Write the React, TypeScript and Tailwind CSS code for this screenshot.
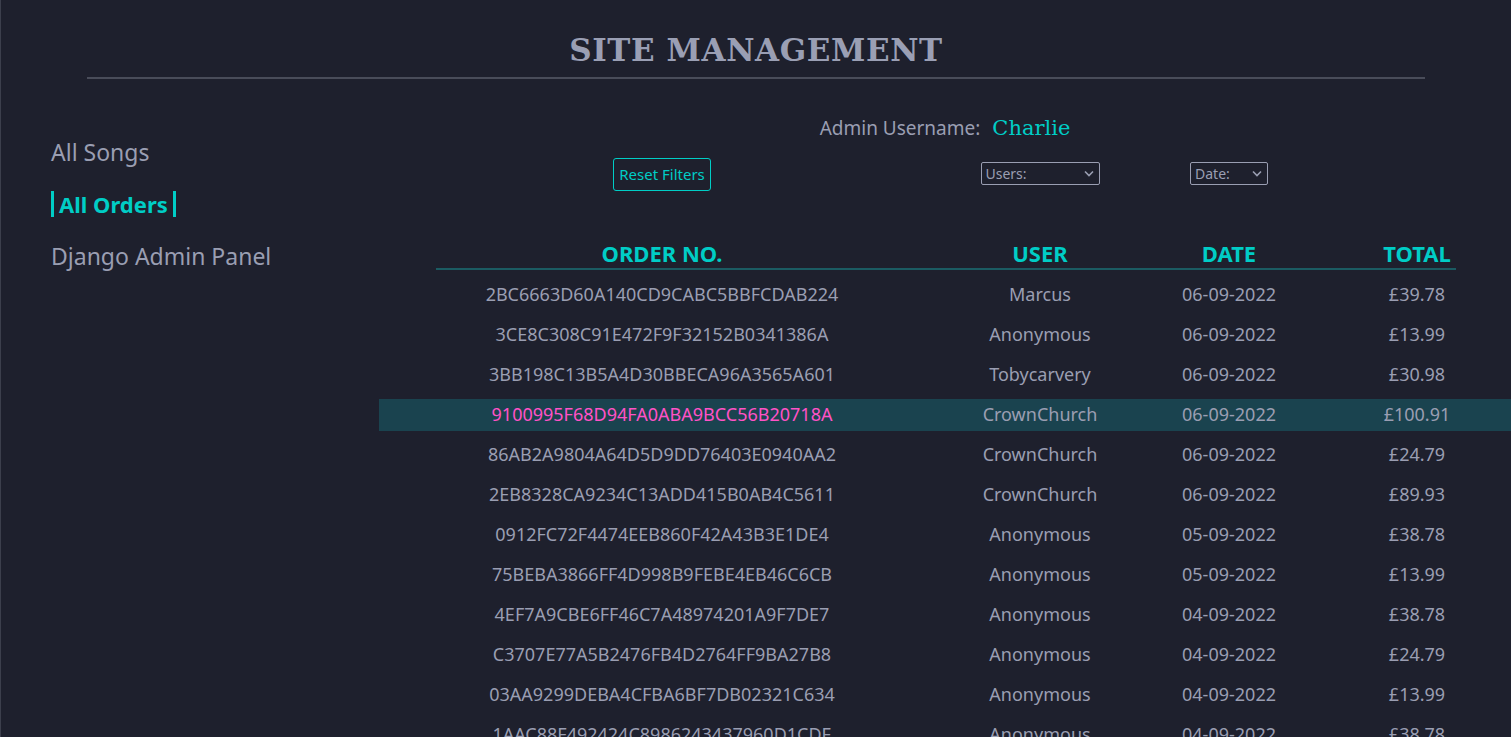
const orders = [
  ["2BC6663D60A140CD9CABC5BBFCDAB224", "Marcus", "06-09-2022", "£39.78"],
  ["3CE8C308C91E472F9F32152B0341386A", "Anonymous", "06-09-2022", "£13.99"],
  ["3BB198C13B5A4D30BBECA96A3565A601", "Tobycarvery", "06-09-2022", "£30.98"],
  ["9100995F68D94FA0ABA9BCC56B20718A", "CrownChurch", "06-09-2022", "£100.91"],
  ["86AB2A9804A64D5D9DD76403E0940AA2", "CrownChurch", "06-09-2022", "£24.79"],
  ["2EB8328CA9234C13ADD415B0AB4C5611", "CrownChurch", "06-09-2022", "£89.93"],
  ["0912FC72F4474EEB860F42A43B3E1DE4", "Anonymous", "05-09-2022", "£38.78"],
  ["75BEBA3866FF4D998B9FEBE4EB46C6CB", "Anonymous", "05-09-2022", "£13.99"],
  ["4EF7A9CBE6FF46C7A48974201A9F7DE7", "Anonymous", "04-09-2022", "£38.78"],
  ["C3707E77A5B2476FB4D2764FF9BA27B8", "Anonymous", "04-09-2022", "£24.79"],
  ["03AA9299DEBA4CFBA6BF7DB02321C634", "Anonymous", "04-09-2022", "£13.99"],
  ["1AAC88F492424C8986243437960D1CDE", "Anonymous", "04-09-2022", "£38.78"],
];

const HIGHLIGHT = 3;

function Select({ label, width }: { label: string; width: string }) {
  return (
    <div className={`${width} h-[23px] -mt-[3px] border border-[#9a9eb2] rounded-[2px] flex items-center justify-between pl-[4px] pr-[5px] text-[14px] text-[#9a9eb2]`}>
      <span>{label}</span>
      <svg width="10" height="7" viewBox="0 0 10 7" fill="none">
        <path d="M1 1.5l4 4 4-4" stroke="#9a9eb2" strokeWidth="1.6" />
      </svg>
    </div>
  );
}

export default function App() {
  return (
    <div className="h-[737px] overflow-hidden bg-[#1e202d] border-l border-[#3c3f4c] text-[#9a9eb2] font-['Noto_Sans',sans-serif]">
      {/* Title */}
      <div className="pt-[30px] px-[86px]">
        <h1 className="text-center text-[31px] leading-[40px] font-bold tracking-[0.6px] text-[#9a9fb4] font-['DejaVu_Serif',serif]">
          SITE MANAGEMENT
        </h1>
        <div className="mt-[7px] h-[2px] bg-[#494c59]" />
      </div>

      <div className="flex">
        {/* Sidebar */}
        <nav className="w-[378px] shrink-0 pl-[50px] pt-[57px] flex flex-col gap-[21px] text-[23px] leading-[32px]">
          <a className="text-[#9a9eb2]">All Songs</a>
          <a className="self-start font-bold text-[22px] text-[#00cdc6] border-x-[3px] border-[#00cdc6] px-[5px] leading-[26px] my-[2px]">
            All Orders
          </a>
          <a className="text-[#9a9eb2]">Django Admin Panel</a>
        </nav>

        {/* Main */}
        <main className="flex-1 min-w-0 pt-[34px]">
          <div className="flex justify-center items-baseline gap-[12px]">
            <span className="text-[19px]">Admin Username:</span>
            <span className="text-[21px] text-[#00cdc6] font-['DejaVu_Serif',serif]">Charlie</span>
          </div>

          <div className="grid grid-cols-[566px_190px_188px_188px] items-center mt-[13px] h-[34px]">
            <div className="flex justify-center">
              <button className="h-[33px] px-[5px] border border-[#00cdc6] rounded-[3px] text-[15px] text-[#00cdc6]">
                Reset Filters
              </button>
            </div>
            <div className="flex justify-center">
              <Select label="Users:" width="w-[119px]" />
            </div>
            <div className="flex justify-center">
              <Select label="Date:" width="w-[78px]" />
            </div>
            <div />
          </div>

          {/* Table */}
          <div className="mt-[48px]">
            <div className="grid grid-cols-[566px_190px_188px_188px] text-center text-[22px] leading-[26px] font-bold text-[#00cdc6]">
              <div>ORDER NO.</div>
              <div>USER</div>
              <div>DATE</div>
              <div>TOTAL</div>
            </div>
            <div className="ml-[57px] mr-[55px] mt-[2px] h-[2px] bg-[#1b5b62]" />
            <div className="mt-[9px] flex flex-col gap-[8px]">
              {orders.map((o, i) => (
                <div
                  key={o[0]}
                  className={`grid grid-cols-[566px_190px_188px_188px] h-[32px] items-center text-center text-[18px] ${
                    i === HIGHLIGHT ? "bg-[#1a434f]" : ""
                  }`}
                >
                  <div className={i === HIGHLIGHT ? "text-[#ff52c6]" : ""}>{o[0]}</div>
                  <div>{o[1]}</div>
                  <div>{o[2]}</div>
                  <div>{o[3]}</div>
                </div>
              ))}
            </div>
          </div>
        </main>
      </div>
    </div>
  );
}
